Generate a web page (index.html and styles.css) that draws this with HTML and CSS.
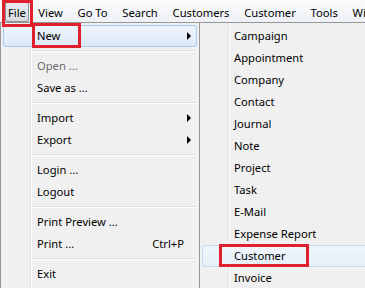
FILE: index.html
```html
<!DOCTYPE html>
<html lang="en">
<head>
  <meta charset="UTF-8" />
  <title>File menu</title>
  <link rel="stylesheet" href="styles.css">
</head>
<body>
  <div class="app">
    <nav class="menubar">
      <span class="bar-item pressed">File</span>
      <span class="bar-item">View</span>
      <span class="bar-item">Go To</span>
      <span class="bar-item">Search</span>
      <span class="bar-item">Customers</span>
      <span class="bar-item">Customer</span>
      <span class="bar-item">Tools</span>
      <span class="bar-item">Window</span>
    </nav>

    <div class="menu file-menu">
      <div class="item active has-sub">New</div>
      <div class="sep"></div>
      <div class="item disabled">Open ...</div>
      <div class="item">Save as ...</div>
      <div class="sep"></div>
      <div class="item has-sub">Import</div>
      <div class="item has-sub">Export</div>
      <div class="sep"></div>
      <div class="item">Login ...</div>
      <div class="item">Logout</div>
      <div class="sep"></div>
      <div class="item">Print Preview ...</div>
      <div class="item">Print ... <span class="shortcut">Ctrl+P</span></div>
      <div class="sep"></div>
      <div class="item">Exit</div>
    </div>

    <div class="menu new-menu">
      <div class="item">Campaign</div>
      <div class="item">Appointment</div>
      <div class="item">Company</div>
      <div class="item">Contact</div>
      <div class="item">Journal</div>
      <div class="item">Note</div>
      <div class="item">Project</div>
      <div class="item">Task</div>
      <div class="item">E-Mail</div>
      <div class="item">Expense Report</div>
      <div class="item hover">Customer</div>
      <div class="item">Invoice</div>
    </div>

    <div class="mark mark-file"></div>
    <div class="mark mark-new"></div>
    <div class="mark mark-customer"></div>
  </div>
</body>
</html>
```

FILE: styles.css
```css
body {
  margin: 0;
  font-family: "Noto Sans", "Open Sans", sans-serif;
  font-size: 11.2px;
  color: #000;
  background: #f0f0f0;
  overflow: hidden;
}

.app {
  position: relative;
  width: 365px;
  height: 288px;
  overflow: hidden;
}

.menubar {
  display: flex;
  height: 22px;
  padding: 0 0 0 1px;
  background: linear-gradient(#fafbfc, #eef1f5);
  white-space: nowrap;
}

.bar-item {
  padding: 3px 7.4px 0;
  line-height: 19px;
}

.bar-item.pressed {
  margin: 2px 0 0 4px;
  padding: 1px 2px 0;
  height: 17px;
  line-height: 17px;
  border: 1px solid #8d8f91;
  border-radius: 2px;
  background: linear-gradient(#e8ebee, #d7dbe0);
}

.bar-item.pressed + .bar-item {
  margin-left: 2px;
}

.menu {
  position: absolute;
  top: 22px;
  padding: 2px;
  border: 1px solid #979797;
  background: #f0f0f0;
  height: 300px;
  box-sizing: border-box;
}

.menu::before {
  content: "";
  position: absolute;
  top: 2px;
  bottom: 0;
  width: 1px;
  border-right: 1px solid #fff;
  background: #e2e3e3;
}

.file-menu {
  left: 0;
  width: 200px;
}

.file-menu::before {
  left: 29px;
}

.new-menu {
  left: 199px;
  width: 180px;
}

.new-menu::before {
  left: 28px;
}

.item {
  position: relative;
  height: 22px;
  padding-left: 33px;
  border: 1px solid transparent;
  border-radius: 3px;
  box-sizing: border-box;
  white-space: nowrap;
  line-height: 20px;
}

.new-menu .item {
  padding-left: 31px;
}

.item.active {
  border-color: #a9c8ee;
  background: linear-gradient(#eef4fb, #dde8f6);
}

.item.hover {
  border-color: #c9dbf2;
  background: linear-gradient(#f1f6fc, #e6eef9);
}

.item.disabled {
  color: #6d6d6d;
}

.has-sub::after {
  content: "";
  position: absolute;
  right: 5px;
  top: 6px;
  border-left: 4px solid #000;
  border-top: 4px solid transparent;
  border-bottom: 4px solid transparent;
}

.shortcut {
  position: absolute;
  right: 12px;
}

.sep {
  height: 8px;
  margin-left: 28px;
  display: flex;
  flex-direction: column;
  justify-content: center;
}

.sep::before {
  content: "";
  height: 1px;
  background: #e0e0e0;
  border-bottom: 1px solid #fff;
}

.mark {
  position: absolute;
  border: 3px solid #e0202c;
}

.mark-file {
  left: 2px;
  top: 0;
  width: 25px;
  height: 21px;
}

.mark-new {
  left: 32px;
  top: 23px;
  width: 43px;
  height: 19px;
}

.mark-customer {
  left: 219px;
  top: 244px;
  width: 84px;
  height: 17px;
}
```
